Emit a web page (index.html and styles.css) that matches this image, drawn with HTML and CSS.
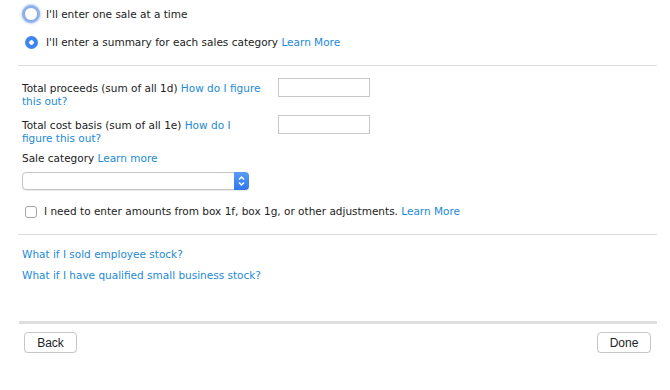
FILE: index.html
```html
<!DOCTYPE html>
<html lang="en">
<head>
  <meta charset="UTF-8">
  <title>Sales summary</title>
  <link rel="stylesheet" href="styles.css">
</head>
<body>

<div class="page">
  <div class="choices">
    <label class="choice">
      <input type="radio" name="mode" class="radio focus">
      <span>I'll enter one sale at a time</span>
    </label>
    <label class="choice second">
      <input type="radio" name="mode" class="radio" checked>
      <span>I'll enter a summary for each sales category <a href="#">Learn More</a></span>
    </label>
  </div>

  <hr class="rule">

  <div class="form">
    <div class="field">
      <div class="field-label">Total proceeds (sum of all 1d) <a href="#">How do I figure this out?</a></div>
      <input type="text" class="amount">
    </div>
    <div class="field">
      <div class="field-label">Total cost basis (sum of all 1e) <a href="#">How do I figure this out?</a></div>
      <input type="text" class="amount">
    </div>

    <div class="category-label">Sale category <a href="#">Learn more</a></div>
    <div class="select">
      <span class="select-arrows">
        <svg width="9" height="12" viewBox="0 0 9 12">
          <path d="M2 4.5 L4.5 2 L7 4.5 M2 7.5 L4.5 10 L7 7.5" fill="none" stroke="#fff" stroke-width="1.5"/>
        </svg>
      </span>
    </div>

    <label class="adjust">
      <input type="checkbox" class="check">
      <span>I need to enter amounts from box 1f, box 1g, or other adjustments. <a href="#">Learn More</a></span>
    </label>
  </div>

  <hr class="rule">

  <div class="links">
    <a href="#">What if I sold employee stock?</a>
    <a href="#">What if I have qualified small business stock?</a>
  </div>

  <div class="footer">
    <button class="btn">Back</button>
    <button class="btn">Done</button>
  </div>
</div>

</body>
</html>
```

FILE: styles.css
```css
* {
  box-sizing: border-box;
}

html, body {
  margin: 0;
  background: #fff;
}

body {
  font-family: "DejaVu Sans", Verdana, sans-serif;
  font-size: 10.5px;
  line-height: 13px;
  color: #222;
}

a {
  color: #1d8ad6;
  text-decoration: none;
}

.page {
  padding: 0 13px 0 18px;
}

.choices {
  padding: 3px 0 0 4px;
}

.choice {
  display: flex;
  align-items: center;
  gap: 8px;
  height: 22px;
}

.choice.second {
  margin-top: 6px;
}

.radio {
  appearance: none;
  margin: 0 0 0 3px;
  width: 13px;
  height: 13px;
  border-radius: 50%;
  border: 1px solid #a9a9a9;
  background: #fff;
}

.radio.focus {
  width: 14px;
  height: 14px;
  margin-left: 2px;
  border-color: #8fa7c9;
  box-shadow: 0 0 0 2px #8cb2f2, 0 0 2px 3px rgba(140, 178, 242, 0.5);
}

.radio:checked {
  border: none;
  background: radial-gradient(circle, #fff 0 2px, #3d86f2 2.5px);
}

.rule {
  border: none;
  border-top: 1px solid #dcdcdc;
  margin: 0;
}

.choices + .rule {
  margin-top: 12px;
}

.form {
  padding: 12px 0 0 4px;
}

.field {
  display: grid;
  grid-template-columns: 256px 92px;
  align-items: start;
  margin-bottom: 7px;
}

.field-label {
  padding: 4px 16px 0 0;
}

.amount {
  height: 19px;
  margin: 0;
  border: 1px solid #c8c8c8;
  background: #fff;
}

.select {
  width: 227px;
  height: 18px;
  margin-top: 7px;
  border: 1px solid #c4c4c4;
  border-radius: 4px;
  background: #fff;
  box-shadow: 0 1px 1px rgba(0, 0, 0, 0.08);
  display: flex;
  justify-content: flex-end;
}

.select-arrows {
  width: 15px;
  margin: -1px -1px -1px 0;
  border-radius: 0 4px 4px 0;
  background: linear-gradient(#5a9bf6, #2f78f0);
  display: flex;
  align-items: center;
  justify-content: center;
}

.adjust {
  display: flex;
  align-items: center;
  gap: 7px;
  margin: 15px 0 16px;
}

.check {
  appearance: none;
  width: 12px;
  height: 12px;
  margin: 0 0 0 3px;
  border: 1px solid #a5a5a5;
  border-radius: 3px;
  background: #fff;
}

.links {
  display: flex;
  flex-direction: column;
  gap: 8px;
  padding: 13px 0 0 4px;
}

.footer {
  margin-top: 39px;
  border-top: 3px solid #dedede;
  margin-left: 1px;
  padding: 8px 6px 0 5px;
  display: flex;
  justify-content: space-between;
}

.btn {
  width: 53px;
  height: 21px;
  border: 1px solid #c6c6c6;
  border-radius: 4px;
  background: #fff;
  box-shadow: 0 1px 0 rgba(0, 0, 0, 0.06);
  font-family: "Liberation Sans", Arial, sans-serif;
  font-size: 12px;
  color: #222;
  padding: 0;
}

.btn:last-child {
  width: 54px;
}
```
